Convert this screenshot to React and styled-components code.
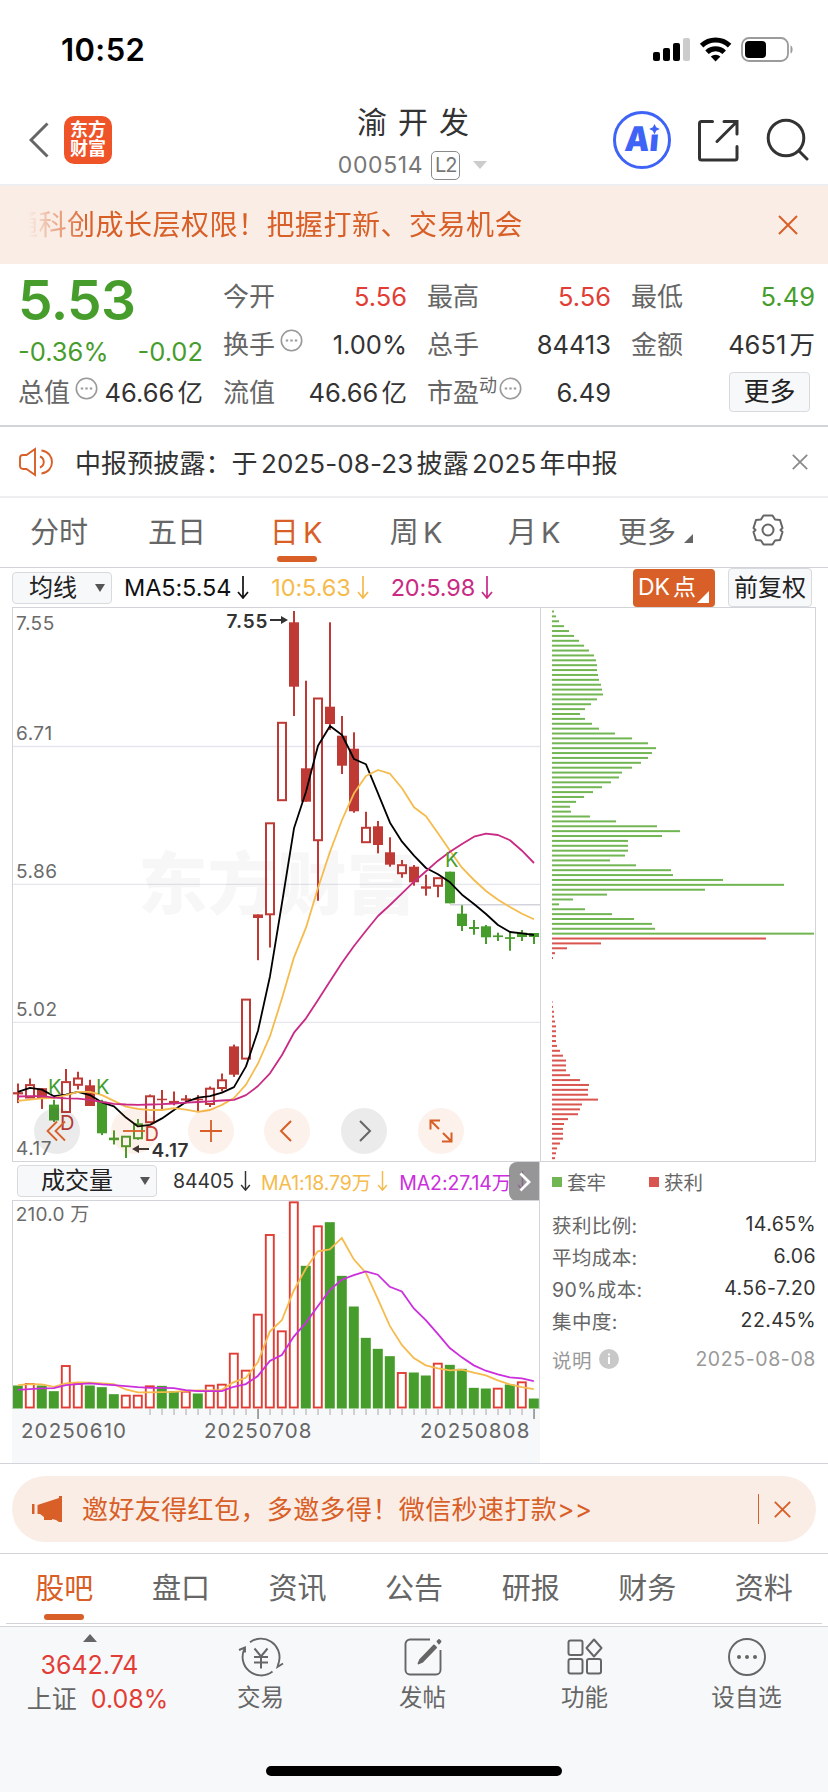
import React from "react"
import styled, { createGlobalStyle } from "styled-components"

const GREEN = "#479d2c"
const RED = "#e23d35"
const CANDLE_RED = "#bf3a35"
const ORANGE = "#d85f27"
const YELLOW = "#f5bb4d"
const MAGENTA = "#c92a84"
const PURPLE = "#cb2fdd"
const LINE = "#d3d4d9"

const GlobalStyle = createGlobalStyle`
  *, *::before, *::after {
    box-sizing: border-box;
  }

  body {
    margin: 0;
    background: #fff;
    color: #333;
    font-family: Inter, "Noto Sans CJK SC", sans-serif;
    text-autospace: normal;
  }

  svg {
    display: block;
    flex: none;
  }
`

const Page = styled.div`
  width: 828px;
  height: 1792px;
  overflow: hidden;
  display: flex;
  flex-direction: column;
  white-space: nowrap;
`

/* status bar */

const StatusBar = styled.div`
  height: 96px;
  padding: 3px 33px 0 61px;
  display: flex;
  align-items: center;
  justify-content: space-between;
`

const Clock = styled.span`
  font-size: 31px;
  font-weight: 600;
  letter-spacing: 0.4px;
  color: #000;
`

/* header */

const Header = styled.header`
  height: 90px;
  padding-bottom: 2px;
  border-bottom: 2px solid #eeeef0;
  display: grid;
  grid-template-columns: 276px 1fr 276px;
`

const HeaderLeft = styled.div`
  display: flex;
  align-items: center;
  gap: 15px;
  padding-left: 29px;
  padding-top: 2px;
`

const HeaderRight = styled.div`
  display: flex;
  align-items: center;
  justify-content: flex-end;
  padding-top: 1px;
  padding-right: 19px;
`

const AppLogo = styled.div`
  width: 48px;
  height: 48px;
  border-radius: 10px;
  background: #ee5427;
  color: #fff;
  font-size: 18px;
  font-weight: 700;
  line-height: 19px;
  text-align: center;
  padding-top: 4px;
  white-space: normal;
`

const Title = styled.div`
  display: flex;
  flex-direction: column;
  align-items: center;
`

const StockName = styled.h1`
  margin: 5px 0 0;
  font-size: 30px;
  font-weight: 400;
  line-height: 42px;
  letter-spacing: 11px;
  padding-left: 9px;
`

const StockCode = styled.div`
  display: flex;
  align-items: center;
  height: 30px;
  margin-top: 7px;
  padding-right: 3px;
  font-size: 23px;
  letter-spacing: 0.6px;
  color: #777;
`

const Level = styled.span`
  width: 29px;
  height: 29px;
  margin: 0 13px 0 8px;
  border: 1.5px solid #8a8a8a;
  border-radius: 5px;
  font-size: 20px;
  line-height: 27px;
  text-align: center;
  letter-spacing: -1px;
`

const Caret = styled.span`
  border: ${p => p.$size || 7}px solid transparent;
  border-top-color: ${p => p.$color || "#ccc"};
  border-top-width: ${p => p.$tall || 8}px;
  border-bottom-width: 0;
`

/* banner */

const Banner = styled.div`
  height: 78px;
  padding: 0 30px 0 28px;
  background: #faede6;
  display: flex;
  align-items: center;
  justify-content: space-between;
  color: ${ORANGE};
`

const Marquee = styled.div`
  display: flex;
  justify-content: flex-end;
  width: 495px;
  overflow: hidden;
  font-size: 28px;
  letter-spacing: 0.5px;
  line-height: 42px;
  mask-image: linear-gradient(to right, transparent, #000 60px);
`

/* quote */

const Quote = styled.section`
  height: 163px;
  padding: 9px 13px 0 18px;
  border-bottom: 2px solid ${LINE};
  display: grid;
  grid-template-columns: 185px 184px 184px 184px;
  column-gap: 20px;
`

const QuoteColumn = styled.div`
  display: grid;
  grid-template-rows: 48px 48px 48px;
  align-items: center;
  height: 144px;
`

const Price = styled.div`
  font-size: 55px;
  font-weight: 600;
  line-height: 48px;
  padding-top: 6px;
  color: ${GREEN};
  letter-spacing: -0.6px;
`

const Pair = styled.div`
  display: flex;
  align-items: center;
  justify-content: space-between;
  font-size: 25.5px;
  line-height: 36px;
  color: ${p => p.$color || "#333"};
  padding-top: ${p => p.$drop || 0}px;
`

const Label = styled.span`
  display: flex;
  color: #666;
  font-size: 26px;

  svg {
    margin: 2px 0 0 5px;
  }
`

const Sup = styled.span`
  margin-right: -3px;
  font-size: 18px;
  line-height: 22px;
`

const MoreButton = styled.button`
  justify-self: end;
  width: 81px;
  height: 40px;
  margin-right: 5px;
  margin-top: -2px;
  padding: 0;
  border: 1.5px solid #d8dade;
  border-radius: 4px;
  background: #f7f8fa;
  color: #222;
  font: inherit;
  font-size: 26px;
  line-height: 34px;
`

/* notice */

const Notice = styled.div`
  height: 71px;
  padding: 0 20px 0 19px;
  border-bottom: 2px solid #eeeef0;
  display: flex;
  align-items: center;
`

const NoticeText = styled.span`
  flex: 1;
  margin-left: 21px;
  font-size: 26px;
  letter-spacing: 0.1px;
`

/* tabs */

const Tabs = styled.nav`
  height: 70px;
  border-bottom: 1.5px solid ${LINE};
  display: grid;
  grid-template-columns: 118px 118px 121px 119px 117px 108px 133px;
`

const Tab = styled.div`
  position: relative;
  display: flex;
  align-items: center;
  justify-content: center;
  padding-bottom: 5px;
  font-size: 29px;
  letter-spacing: ${p => p.$spacing || 0}px;
  color: ${p => (p.$active ? ORANGE : "#666")};

  &::after {
    content: "";
    display: ${p => (p.$active ? "block" : "none")};
    position: absolute;
    left: calc(50% - 20px);
    bottom: ${p => p.$bottom || 5}px;
    width: 40px;
    height: 6px;
    border-radius: 3px;
    background: ${ORANGE};
  }
`

const Corner = styled.i`
  align-self: flex-end;
  margin: ${p => p.$margin || "0"};
  border-style: solid;
  border-width: 0 0 ${p => p.$h}px ${p => p.$w}px;
  border-color: transparent transparent ${p => p.$color} transparent;
`

/* indicator rows */

const Indicators = styled.div`
  height: 39px;
  padding: 0 16px 0 12px;
  display: flex;
  align-items: center;
`

const Select = styled.div`
  width: ${p => p.$width}px;
  height: 32px;
  flex: none;
  padding: 0 6px 0 ${p => p.$pad}px;
  border: 1.5px solid #d8dade;
  border-radius: 4px;
  background: #f7f8fa;
  display: flex;
  align-items: center;
  justify-content: space-between;
  color: #222;
  font-size: 24px;
  line-height: 28px;
`

const Average = styled.span`
  display: flex;
  align-items: center;
  gap: ${p => p.$gap || 6}px;
  margin-left: ${p => p.$left}px;
  font-size: ${p => p.$size || 23.5}px;
  letter-spacing: -0.1px;
  color: ${p => p.$color};
  text-autospace: no-autospace;
`

const DkButton = styled.div`
  width: 82px;
  height: 38px;
  margin-left: auto;
  padding-left: 5px;
  border-radius: 4px;
  background: ${ORANGE};
  color: #fff;
  display: flex;
  align-items: center;
  font-size: 23px;
  line-height: 35px;
`

const AdjustButton = styled.div`
  width: 84px;
  height: 39px;
  margin-left: 13px;
  border: 1.5px solid #d8dade;
  border-radius: 4px;
  background: #f7f8fa;
  color: #222;
  font-size: 24px;
  line-height: 37px;
  text-align: center;
`

/* charts */

const Charts = styled.section`
  height: 857px;
  padding: 0 12px;
  border-bottom: 1.5px solid ${LINE};
  display: grid;
  grid-template-columns: 528px 276px;
`

const PricePanel = styled.div`
  position: relative;
  height: 555px;
  border: 1.5px solid ${LINE};
  border-right: 0;
`

const Tools = styled.div`
  position: absolute;
  left: 21px;
  bottom: 7px;
  display: flex;
  gap: 30.8px;
`

const Tool = styled.button`
  width: 46px;
  height: 46px;
  padding: 0;
  border: 0;
  border-radius: 50%;
  background: ${p => (p.$gray ? "rgba(60, 60, 60, 0.1)" : "rgba(225, 100, 30, 0.09)")};
  display: flex;
  align-items: center;
  justify-content: center;
`

const VolumeBar = styled.div`
  position: relative;
  height: 38px;
  padding-left: 5px;
  border-right: 1.5px solid ${LINE};
  display: flex;
  align-items: center;
  overflow: hidden;
`

const ScrollButton = styled.div`
  position: absolute;
  right: -1.5px;
  top: 0;
  width: 32px;
  height: 39px;
  border-radius: 8px 0 0 8px;
  background: rgba(120, 120, 120, 0.78);
  display: flex;
  align-items: center;
  justify-content: center;
`

const VolumePanel = styled.div`
  height: 209px;
  border: 1.5px solid ${LINE};
  border-bottom: 0;
`

const DateAxis = styled.div`
  height: 54px;
  background: #f7f8fa;
`

const Dates = styled.div`
  display: grid;
  grid-template-columns: 183px 216px 1fr;
  padding-left: 9px;
  color: #666;
  font-size: 20.5px;
  line-height: 24px;
  letter-spacing: 1.1px;
  margin-top: -2px;
`

const ProfilePanel = styled.div`
  height: 555px;
  border: 1.5px solid ${LINE};
`

const Legend = styled.div`
  display: flex;
  height: 44px;
  align-items: center;
  padding: 0 0 5px 12px;
  color: #666;
  font-size: 19.5px;
`

const Swatch = styled.i`
  width: 10px;
  height: 10px;
  margin-right: 5px;
  margin-left: ${p => p.$left || 0}px;
  background: ${p => p.$color};
`

const Stats = styled.div`
  padding: 2px 0 0 12px;
`

const Stat = styled.div`
  display: flex;
  align-items: center;
  justify-content: space-between;
  height: 32px;
  margin-top: ${p => (p.$muted ? 7 : 0)}px;
  font-size: 19.5px;
  letter-spacing: ${p => (p.$muted ? 0.6 : 0.4)}px;
  color: ${p => (p.$muted ? "#999" : "#333")};

  span:first-child {
    display: flex;
    align-items: center;
    gap: 7px;
    color: ${p => (p.$muted ? "#999" : "#666")};
  }
`

/* promo */

const Promo = styled.div`
  height: 90px;
  padding: 12px 12px 0;
  border-bottom: 1.5px solid ${LINE};
`

const Pill = styled.div`
  height: 66px;
  padding: 0 25px 0 20px;
  border-radius: 33px;
  background: #faede6;
  color: ${ORANGE};
  display: flex;
  align-items: center;
  font-size: 26px;
  letter-spacing: 0.4px;

  span {
    flex: 1;
    margin-left: 20px;
    padding-bottom: 3px;
  }
`

const Rule = styled.i`
  width: 1.5px;
  height: 30px;
  margin-right: 15px;
  background: ${ORANGE};
`

/* bottom */

const SectionTabs = styled.nav`
  height: 70px;
  margin: 0 6px;
  border-bottom: 1.5px solid ${LINE};
  display: grid;
  grid-template-columns: repeat(7, 116.6px);
`

const BottomBar = styled.footer`
  flex: 1;
  margin-top: 2px;
  border-top: 1.5px solid ${LINE};
  background: #f7f8fa;
  display: flex;
  flex-direction: column;
  align-items: center;
`

const Actions = styled.div`
  width: 828px;
  height: 139px;
  display: grid;
  grid-template-columns: 179px 162px 162px 162px 162px;
`

const IndexQuote = styled.div`
  display: flex;
  flex-direction: column;
  align-items: center;
  padding-top: 7px;
  color: ${RED};
  font-size: 25px;
  line-height: 34px;
`

const UpCaret = styled.i`
  border: 7px solid transparent;
  border-bottom: 8px solid #666;
  border-top: 0;
  margin-bottom: 6px;
`

const IndexRow = styled.div`
  display: flex;
  gap: 14px;
  padding-left: 16px;

  span:first-child {
    color: #666;
    font-size: 25px;
  }
`

const Action = styled.div`
  display: flex;
  flex-direction: column;
  align-items: center;
  padding-top: 10px;
  padding-left: 1px;
  color: #666;
  font-size: 23.5px;
  line-height: 34px;
  gap: 4px;
`

const HomeIndicator = styled.div`
  width: 296px;
  height: 10px;
  border-radius: 5px;
  background: #000;
`

/* [kind, body top, body bottom, high, low] - r/g filled, R/G hollow */
const candles = [
  ["r", 492.2, 494.4, 483.5, 503.1],
  ["R", 484.6, 498, 478.4, 498],
  ["r", 488.2, 498.7, 488.2, 508.9],
  ["g", 504.6, 520.5, 499.8, 522],
  ["R", 481.6, 512.5, 468.9, 512.5],
  ["R", 478, 485.3, 471.8, 489.6],
  ["r", 485.3, 506, 479.8, 506],
  ["g", 501.6, 533.3, 499.8, 535.1],
  ["g", 537.6, 540.2, 530.4, 544.5],
  ["G", 536.2, 546.7, 536.2, 558],
  ["G", 523.8, 538.7, 519.1, 539.8],
  ["R", 495.8, 522.7, 494.4, 522.7],
  ["r", 498.7, 500.2, 490, 510.4],
  ["r", 500.9, 503.1, 491.5, 505.3],
  ["r", 498.4, 500.5, 495.1, 503.5],
  ["r", 498.7, 500.2, 495.1, 511.8],
  ["R", 488.2, 504.5, 486.4, 507.1],
  ["R", 479.8, 488.5, 473.6, 491.5],
  ["r", 446.4, 474.7, 444.6, 476.9],
  ["R", 399.1, 459.1, 399.1, 459.1],
  ["r", 314.4, 318, 314.4, 360.2],
  ["R", 222.8, 314.8, 222.8, 347.5],
  ["R", 122.3, 200.7, 122.3, 200.7],
  ["r", 22.3, 86.7, 11, 116],
  ["r", 168.3, 201.7, 80.7, 201.7],
  ["R", 98, 240.7, 98, 300.7],
  ["r", 106.7, 124, 22.3, 130],
  ["r", 135.7, 165.7, 116, 174],
  ["r", 148.7, 211.3, 132.3, 212.7],
  ["R", 227.3, 242.7, 211.7, 242.7],
  ["r", 226.3, 245, 221, 253.3],
  ["r", 252.3, 264.7, 237.3, 266.7],
  ["R", 264.7, 273.7, 260, 277.7],
  ["r", 266.7, 282.3, 265, 285.7],
  ["r", 286.3, 288.7, 274.7, 295.7],
  ["R", 277.7, 286.3, 277.7, 297.3],
  ["g", 271.7, 303.3, 271.7, 303.3],
  ["g", 313.7, 326, 305.3, 331],
  ["g", 327, 329, 320, 334.7],
  ["g", 326.3, 337.3, 325, 344],
  ["g", 335.4, 337.1, 332.7, 341],
  ["g", 337.2, 338.9, 332, 350.7],
  ["g", 332.7, 337, 330, 341],
  ["g", 333, 337, 333, 344],
]

const ma5 = [
  491.8, 487.8, 489.6, 496.2, 494.7, 491.8, 495.1, 502.4, 506.4, 517.6, 526.4,
  524.9, 518.4, 510, 502, 497.6, 496.2, 492.6, 487.1, 466.4, 430.8, 376.2, 303,
  228.3, 191.7, 145.7, 126, 135, 159, 164.3, 193.3, 222.7, 241.7, 255.7, 268,
  274.3, 282.3, 294.7, 304, 314, 325, 332, 333.3, 335,
]

const ma10 = [
  500.9, 499.6, 498.4, 498, 495.1, 491.8, 491.8, 495.1, 500.9, 506.7, 508.9,
  510, 510, 508.2, 509.6, 511.8, 510, 504.9, 498, 484.6, 463.5, 436.2, 398.3,
  357.3, 327.7, 288, 251.7, 220, 193.3, 176, 170, 173.7, 188.3, 207.3, 216.3,
  233.3, 250.7, 267.7, 280, 291, 299.7, 307, 313.7, 319.3,
]

const ma20 = [
  496.5, 496.2, 496.2, 497.6, 498.4, 498.7, 499.8, 502, 503.8, 504.5, 504.9,
  504.5, 504.2, 503.5, 502.7, 502, 501.3, 500.5, 499.8, 495.1, 486, 473.3, 455,
  432.7, 418.3, 400, 381.3, 362.7, 346, 330.7, 316, 305, 293.3, 281.7, 271.3,
  260.7, 251.7, 244, 236.7, 233.7, 235, 240.3, 250.7, 263,
]

const profile = [
  2, 4, 7, 12, 17, 22, 27, 32, 37, 42, 44, 45, 45, 46, 47, 49, 50, 51, 45, 39,
  33, 28, 33, 40, 47, 63, 80, 96, 104, 100, 96, 89, 80, 70, 67, 59, 50, 41, 32,
  24, 18, 19, 38, 64, 105, 128, 110, 76, 76, 76, 73, 58, 84, 119, 121, 171, 232,
  153, 55, 21, 7, 33, 60, 82, 100, 103, 263, 214, 49, 15, 3, 1, 0, 0, 0, 0, 0,
  0, 0, 0, 0.5, 1, 2, 2, 3, 4, 4, 4, 4, 5, 8, 11, 14, 14, 14, 18, 28, 37, 36,
  36, 46, 30, 28, 26, 16, 12, 11, 11, 11, 8, 5, 4, 3,
]

const volumes = [
  69, 75, 69, 52, 129, 75, 69, 64, 43, 40, 40, 68, 68, 52, 52, 45, 70, 73, 166,
  115, 283, 522, 233, 620, 428, 548, 559, 398, 306, 212, 179, 157, 108, 108, 99,
  136, 131, 119, 62, 60, 61, 72, 80, 30,
]

const volumeKinds = "grggrrgggrrrggrgrrrrrrrrgrggggggrggrggggrgrg"

const volMa1 = [
  688, 685, 686, 693, 683, 680, 681, 683, 685, 701, 710, 710, 709, 708, 705,
  704, 704, 702, 679, 666, 620, 528, 494, 405, 340, 288, 282, 248, 312, 352,
  430, 511, 568, 607, 629, 638, 644, 642, 651, 659, 674, 686, 694, 700,
].map(v => v / 2.99)

const volMa2 = [
  702, 700, 698, 697, 688, 685, 683, 686, 688, 691, 694, 696, 696, 697, 703,
  706, 706, 706, 693, 685, 661, 616, 598, 543, 502, 452, 404, 373, 359, 348,
  358, 394, 408, 459, 494, 535, 577, 605, 629, 645, 656, 665, 668, 676,
].map(v => v / 2.99)

const x = i => 18 + 12 * i
const toPoints = values => values.map((v, i) => `${x(i)},${v}`).join(" ")

const Close = ({ size = 20, width = 2, color = ORANGE }) => (
  <svg width={size} height={size} viewBox="0 0 20 20" stroke={color} strokeWidth={width}>
    <path d="M1 1l18 18M19 1L1 19" />
  </svg>
)

const DownArrow = ({ width = 12, height = 23 }) => (
  <svg width={width} height={height} viewBox="0 0 12 23" fill="none" stroke="currentColor" strokeWidth="1.7">
    <path d="M6 0v22M1 16l5 6 5-6" />
  </svg>
)

const Dots = () => (
  <svg width="23" height="23" viewBox="0 0 23 23" fill="none" stroke="#999" strokeWidth="1.6">
    <circle cx="11.5" cy="11.5" r="10.2" />
    <path d="M5.8 11.5h2.4M10.3 11.5h2.4M14.8 11.5h2.4" strokeWidth="2.2" />
  </svg>
)

const StatusIcons = () => (
  <svg width="142" height="26" viewBox="0 0 142 26">
    <rect x="0" y="15" width="7" height="9" rx="2" />
    <rect x="10" y="11" width="7" height="13" rx="2" />
    <rect x="20" y="6" width="7" height="18" rx="2" />
    <rect x="30" y="1" width="7" height="23" rx="2" fill="#ccc" />
    <g fill="none" stroke="#000" strokeWidth="5">
      <path d="M48.6 8.6a20 20 0 0 1 28 0" />
      <path d="M54 15.2a12.4 12.4 0 0 1 17.2 0" />
    </g>
    <path d="M57.8 19.6a7 7 0 0 1 9.6 0L62.6 24.5z" />
    <rect x="89" y="1" width="46" height="23" rx="7" fill="none" stroke="#9b9b9b" strokeWidth="1.8" />
    <rect x="92" y="4" width="21" height="17" rx="4" />
    <path d="M137.5 8.5v8c2.8-1 2.8-7 0-8z" fill="#9b9b9b" />
  </svg>
)

const HeaderIcons = () => (
  <svg width="196" height="60" viewBox="0 0 196 60" fill="none" stroke="#333" strokeWidth="3" strokeLinecap="round">
    <circle cx="29" cy="30" r="27.5" stroke="#3f63f7" />
    <g stroke="none" fill="#3f63f7">
      <text
        x="11"
        y="41.5"
        fontSize="34"
        fontWeight="900"
        transform="skewX(-5) translate(3.6 0)"
        textLength="34"
        lengthAdjust="spacingAndGlyphs"
      >
        Ai
      </text>
      <path d="M35.500 12h12v12.500H36z" fill="#fff" />
      <path d="M41.5 14l1.7 3.2 3.6 1.8-3.6 1.8-1.7 3.4-1.7-3.4-3.6-1.8 3.6-1.8z" />
    </g>
    <path d="M99.5 11.5h-11a2 2 0 0 0-2 2v34.500a2 2 0 0 0 2 2H122a2 2 0 0 0 2-2V36.500M111 11.500h13V24M124 11.500L104 31.500" />
    <circle cx="173" cy="28" r="17.8" />
    <path d="M186 41l8 8" />
  </svg>
)

const Candle = ({ kind, top, bottom, high, low, cx }) => {
  const hollow = kind === "R" || kind === "G"
  const color = kind.toLowerCase() === "r" ? CANDLE_RED : GREEN
  if (hollow) {
    return (
      <g fill="none" stroke={color} strokeWidth="2">
        <path d={`M${cx} ${high}V${top}M${cx} ${bottom}V${low}`} />
        <rect x={cx - 4} y={top + 0.5} width="8" height={bottom - top - 1} />
      </g>
    )
  }
  return (
    <g fill={color}>
      <rect x={cx - 1} y={high} width="2" height={low - high} />
      <rect x={cx - 5} y={top} width="10" height={bottom - top} />
    </g>
  )
}

const PriceChart = () => (
  <svg width="527" height="553" viewBox="13 8 527 553" fill="none">
    <path d="M13 146.5H540M13 284.3H540M13 422.4H540" stroke="#e6e6ee" strokeWidth="1.3" />
    <text
      x="138"
      y="309"
      fontSize="68"
      fontWeight="900"
      fill="#000"
      fillOpacity="0.032"
      textLength="278"
      lengthAdjust="spacingAndGlyphs"
    >
      东方财富
    </text>
    <path d="M450 304.7H540" stroke="#d3d3dc" strokeWidth="1.5" />
    <g fill="#6b6b6b" fontSize="19" letterSpacing="0.5">
      <text x="16" y="30">7.55</text>
      <text x="16" y="139.5">6.71</text>
      <text x="16" y="277.7">5.86</text>
      <text x="16" y="415.5">5.02</text>
      <text x="16" y="554.5">4.17</text>
    </g>
    {candles.map(([kind, top, bottom, high, low], i) => (
      <Candle key={i} kind={kind} top={top} bottom={bottom} high={high} low={low} cx={x(i)} />
    ))}
    <g strokeWidth="1.8" strokeLinejoin="round">
      <polyline points={toPoints(ma5)} stroke="#000" />
      <polyline points={toPoints(ma10)} stroke={YELLOW} />
      <polyline points={toPoints(ma20)} stroke={MAGENTA} />
    </g>
    <g fontSize="20">
      <g fill={GREEN}>
        <text x="48" y="494">K</text>
        <text x="96" y="494">K</text>
        <text x="445" y="267">K</text>
      </g>
      <g fill={CANDLE_RED}>
        <text x="60" y="529.5">D</text>
        <text x="144.500" y="540.500">D</text>
      </g>
    </g>
    <g fill="#333" fontSize="19" fontWeight="600">
      <text x="226.500" y="27.500" textLength="41">7.55</text>
      <text x="151.500" y="556.500" textLength="37">4.17</text>
      <path d="M270 20H284M149 549H137" stroke="#333" strokeWidth="1.8" />
      <path d="M281 16l7 4-7 4zM139 545l-7 4 7 4z" />
    </g>
  </svg>
)

const ToolBar = () => (
  <Tools>
    <Tool $gray>
      <svg width="22" height="22" viewBox="0 0 22 22" fill="none" stroke={ORANGE} strokeWidth="1.8">
        <path d="M11 1.500L1.500 11l9.500 9.500M19 1.500L9.500 11l9.500 9.500" />
      </svg>
    </Tool>
    <Tool>
      <svg width="22" height="22" viewBox="0 0 22 22" stroke={ORANGE} strokeWidth="1.8">
        <path d="M0 11h22" />
      </svg>
    </Tool>
    <Tool>
      <svg width="22" height="22" viewBox="0 0 22 22" stroke={ORANGE} strokeWidth="1.8">
        <path d="M0 11h22M11 0v22" />
      </svg>
    </Tool>
    <Tool>
      <svg width="22" height="22" viewBox="0 0 22 22" fill="none" stroke={ORANGE} strokeWidth="2">
        <path d="M15 1L5 11l10 10" />
      </svg>
    </Tool>
    <Tool $gray>
      <svg width="22" height="22" viewBox="0 0 22 22" fill="none" stroke="#666" strokeWidth="2">
        <path d="M7 1l10 10L7 21" />
      </svg>
    </Tool>
    <Tool>
      <svg width="24" height="24" viewBox="0 0 24 24" fill="none" stroke={ORANGE} strokeWidth="2">
        <path d="M1.500 10.500v-9h9.500M2 2l8 8M22.500 13.500v9H13M22 22l-8-8" />
      </svg>
    </Tool>
  </Tools>
)

const VolumeChart = () => (
  <svg width="525.5" height="208" viewBox="13.2 46 525.5 208" fill="none">
    <text x="16" y="65.5" fontSize="19" fill="#6b6b6b" letterSpacing="0.2">
      210.0 万
    </text>
    {volumes.map((v, i) => {
      const h = v / 3
      return volumeKinds[i] === "g" ? (
        <rect key={i} x={x(i) - 5} y={253.5 - h} width="10" height={h} fill={GREEN} />
      ) : (
        <rect key={i} x={x(i) - 4} y={254 - h} width="8" height={h - 1.5} stroke={RED} strokeWidth="1.9" />
      )
    })}
    <polyline points={toPoints(volMa1)} stroke={YELLOW} strokeWidth="1.8" />
    <polyline points={toPoints(volMa2)} stroke={PURPLE} strokeWidth="1.8" />
  </svg>
)

const AxisTicks = () => (
  <svg width="528" height="12" viewBox="12 0 528 12">
    {volumes.map((_, i) => {
      if (i < 11) return null
      const long = i === 20 || i === 43
      return (
        <rect key={i} x={x(i) - 0.7} y="0" width="1.5" height={long ? 10 : 6} fill={long ? "#888" : "#c4c4c8"} />
      )
    })}
  </svg>
)

const CostProfile = () => (
  <svg width="273" height="552" viewBox="541 8.5 273 552">
    {profile.map((w, i) =>
      w ? (
        <rect key={i} x="552" y={11 + i * 4.881} width={w} height="2" fill={i < 67 ? "#72b653" : "#d9554f"} />
      ) : null
    )}
  </svg>
)

const tabs = ["分时", "五日", "日K", "周K", "月K", "更多"]
const sections = ["股吧", "盘口", "资讯", "公告", "研报", "财务", "资料"]

const stats = [
  ["获利比例:", "14.65%"],
  ["平均成本:", "6.06"],
  ["90%成本:", "4.56-7.20"],
  ["集中度:", "22.45%"],
]

const App = () => (
  <Page>
    <GlobalStyle />
    <StatusBar>
      <Clock>10:52</Clock>
      <StatusIcons />
    </StatusBar>

    <Header>
      <HeaderLeft>
        <svg width="20" height="36" viewBox="0 0 20 36" fill="none" stroke="#666" strokeWidth="3">
          <path d="M18.5 1.5L2 18l16.5 16.5" />
        </svg>
        <AppLogo>
          东方
          <br />
          财富
        </AppLogo>
      </HeaderLeft>
      <Title>
        <StockName>渝开发</StockName>
        <StockCode>
          000514
          <Level>L2</Level>
          <Caret />
        </StockCode>
      </Title>
      <HeaderRight>
        <HeaderIcons />
      </HeaderRight>
    </Header>

    <Banner>
      <Marquee>通科创成长层权限！把握打新、交易机会</Marquee>
      <Close />
    </Banner>

    <Quote>
      <QuoteColumn>
        <Price>5.53</Price>
        <Pair $color={GREEN} $drop={14}>
          <span>-0.36%</span>
          <span>-0.02</span>
        </Pair>
        <Pair>
          <Label>
            总值
            <Dots />
          </Label>
          <span>46.66亿</span>
        </Pair>
      </QuoteColumn>
      <QuoteColumn>
        <Pair $color={RED}>
          <Label>今开</Label>
          <span>5.56</span>
        </Pair>
        <Pair>
          <Label>
            换手
            <Dots />
          </Label>
          <span>1.00%</span>
        </Pair>
        <Pair>
          <Label>流值</Label>
          <span>46.66亿</span>
        </Pair>
      </QuoteColumn>
      <QuoteColumn>
        <Pair $color={RED}>
          <Label>最高</Label>
          <span>5.56</span>
        </Pair>
        <Pair>
          <Label>总手</Label>
          <span>84413</span>
        </Pair>
        <Pair>
          <Label>
            市盈
            <Sup>动</Sup>
            <Dots />
          </Label>
          <span>6.49</span>
        </Pair>
      </QuoteColumn>
      <QuoteColumn>
        <Pair $color={GREEN}>
          <Label>最低</Label>
          <span>5.49</span>
        </Pair>
        <Pair>
          <Label>金额</Label>
          <span>4651万</span>
        </Pair>
        <MoreButton>更多</MoreButton>
      </QuoteColumn>
    </Quote>

    <Notice>
      <svg width="35" height="30" viewBox="0 0 35 30" fill="none" stroke={ORANGE} strokeWidth="1.9">
        <path d="M16 2v26L7.5 22H4a3 3 0 0 1-3-3v-8a3 3 0 0 1 3-3h3.5zM21 9.5c5 2 5 9 0 11M22.5 3.5c14 2 14 21 0 23" />
      </svg>
      <NoticeText>中报预披露：于2025-08-23披露2025年中报</NoticeText>
      <Close size={16} width={2.2} color="#8a8a8a" />
    </Notice>

    <Tabs>
      {tabs.map((name, i) => (
        <Tab key={name} $active={i === 2} $spacing={i > 1 && i < 5 ? 0.8 : 0}>
          {name}
          {i === 5 && <Corner $w={9} $h={9} $color="#666" $margin="0 -17px 19px 8px" />}
        </Tab>
      ))}
      <Tab>
        <svg width="32" height="32" viewBox="0 0 32 32" fill="none" stroke="#666" strokeWidth="2">
          <path
            d="M11.5 1.5h9l2.5 4 5 .5 2.5 8-2 2 2 2-2.500 8-5 .5-2.500 4h-9l-2.500-4-5-.5-2.500-8 2-2-2-2L4 6l5-.5z"
            strokeLinejoin="round"
          />
          <circle cx="16" cy="16" r="5.5" />
        </svg>
      </Tab>
    </Tabs>

    <Indicators>
      <Select $width={100} $pad={16}>
        均线
        <Caret $color="#555" $size={5} $tall={8} />
      </Select>
      <Average $left={12} $color="#111">
        MA5:5.54
        <DownArrow />
      </Average>
      <Average $left={22} $color={YELLOW}>
        10:5.63
        <DownArrow />
      </Average>
      <Average $left={22} $color={MAGENTA}>
        20:5.98
        <DownArrow />
      </Average>
      <DkButton>
        DK点
        <Corner $w={12} $h={12} $color="#fff" $margin="0 0 4px 1px" />
      </DkButton>
      <AdjustButton>前复权</AdjustButton>
    </Indicators>

    <Charts>
      <div>
        <PricePanel>
          <PriceChart />
          <ToolBar />
        </PricePanel>
        <VolumeBar>
          <Select $width={140} $pad={23}>
            成交量
            <Caret $color="#555" $size={5} $tall={8} />
          </Select>
          <Average $left={16} $size={19.5} $color="#333">
            84405
            <DownArrow width={11} height={20} />
          </Average>
          <Average $left={10} $size={19.5} $color={YELLOW}>
            MA1:18.79万
            <DownArrow width={11} height={20} />
          </Average>
          <Average $left={11} $size={19.5} $color={PURPLE}>
            MA2:27.14万
            <DownArrow width={11} height={20} />
          </Average>
          <ScrollButton>
            <svg width="12" height="20" viewBox="0 0 12 20" fill="none" stroke="#fff" strokeWidth="2.8">
              <path d="M1.5 1.5L10 10l-8.5 8.5" />
            </svg>
          </ScrollButton>
        </VolumeBar>
        <VolumePanel>
          <VolumeChart />
        </VolumePanel>
        <DateAxis>
          <AxisTicks />
          <Dates>
            <span>20250610</span>
            <span>20250708</span>
            <span>20250808</span>
          </Dates>
        </DateAxis>
      </div>
      <div>
        <ProfilePanel>
          <CostProfile />
        </ProfilePanel>
        <Legend>
          <Swatch $color="#72b653" />
          套牢
          <Swatch $color="#d9554f" $left={43} />
          获利
        </Legend>
        <Stats>
          {stats.map(([label, value]) => (
            <Stat key={label}>
              <span>{label}</span>
              <span>{value}</span>
            </Stat>
          ))}
          <Stat $muted>
            <span>
              说明
              <svg width="20" height="20" viewBox="0 0 20 20">
                <circle cx="10" cy="10" r="10" fill="#c8c8c8" />
                <path d="M10 8v7M10 4.5v2" stroke="#fff" strokeWidth="2" />
              </svg>
            </span>
            <span>2025-08-08</span>
          </Stat>
        </Stats>
      </div>
    </Charts>

    <Promo>
      <Pill>
        <svg width="30" height="26" viewBox="0 0 30 26" fill={ORANGE}>
          <path d="M27 0h3v26h-3l-3-2-4-1v1h-8v-3l-4-3H5.5V9L27 2zM0 8h2.5v10H0z" />
        </svg>
        <span>邀好友得红包，多邀多得！微信秒速打款&gt;&gt;</span>
        <Rule />
        <Close size={17} width={2.2} />
      </Pill>
    </Promo>

    <SectionTabs>
      {sections.map((name, i) => (
        <Tab key={name} $active={i === 0} $bottom={3}>
          {name}
        </Tab>
      ))}
    </SectionTabs>

    <BottomBar>
      <Actions>
        <IndexQuote>
          <UpCaret />
          <span>3642.74</span>
          <IndexRow>
            <span>上证</span>
            <span>0.08%</span>
          </IndexRow>
        </IndexQuote>
        <Action>
          <svg width="46" height="40" viewBox="0 0 46 40" fill="none" stroke="#666" strokeWidth="1.9">
            <path d="M12 5.300A18.500 18.500 0 0 1 41 24.500L39.500 30l5.500-3.500M34.500 34.500A18.500 18.500 0 0 1 6.900 11M1 13l6-2.500v5" />
            <path d="M16.500 11.500l6.500 8 6.500-8M16 20h14M16 25.500h14M23 19.500V31.500" strokeWidth="2" />
          </svg>
          交易
        </Action>
        <Action>
          <svg width="40" height="40" viewBox="0 0 40 40" fill="none" stroke="#666" strokeWidth="1.9">
            <path d="M27 2.5H7a4.500 4.500 0 0 0-4.500 4.500v26A4.500 4.500 0 0 0 7 37.500h26a4.500 4.500 0 0 0 4.500-4.500V13" />
            <path
              d="M31 8.500l2 2L19 25l-3.500 1.500L17 23zM34.500 4.500l1.500-1.500 1.500 1.500-1.500 2z"
              fill="#666"
              strokeLinejoin="round"
            />
          </svg>
          发帖
        </Action>
        <Action>
          <svg width="38" height="40" viewBox="0 0 38 40" fill="none" stroke="#666" strokeWidth="2">
            <rect x="2.5" y="3.500" width="14" height="14.500" rx="2" />
            <rect x="2.5" y="22" width="14" height="14.500" rx="2" />
            <rect x="21" y="22" width="14" height="14.500" rx="2" />
            <path d="M28 2.500l7.500 8.500-7.500 8.500-7.500-8.500z" strokeLinejoin="round" />
          </svg>
          功能
        </Action>
        <Action>
          <svg width="40" height="40" viewBox="0 0 40 40" fill="none" stroke="#666" strokeWidth="1.9">
            <circle cx="20" cy="20" r="18" />
            <g fill="#666" stroke="none">
              <circle cx="12" cy="20" r="2" />
              <circle cx="20" cy="20" r="2" />
              <circle cx="28" cy="20" r="2" />
            </g>
          </svg>
          设自选
        </Action>
      </Actions>
      <HomeIndicator />
    </BottomBar>
  </Page>
)

export default App
